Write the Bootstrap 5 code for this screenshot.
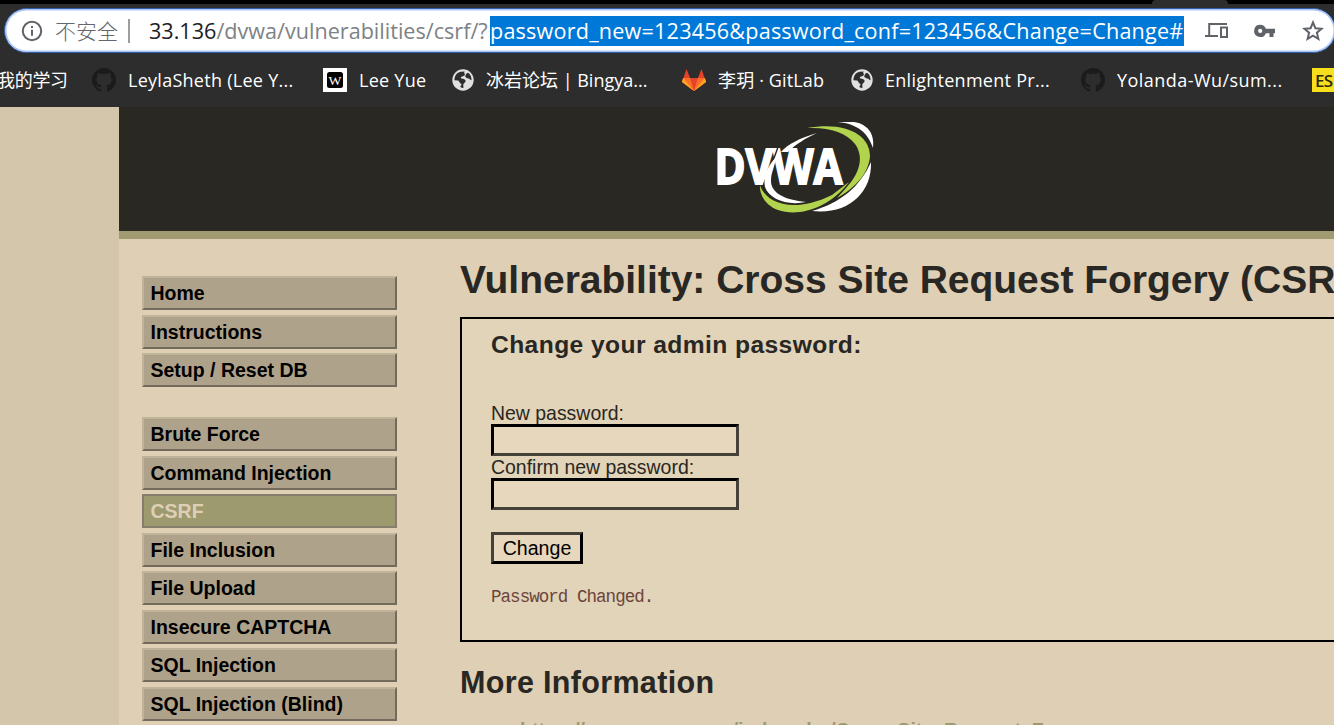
<!DOCTYPE html>
<html lang="en">
<head>
<meta charset="utf-8">
<title>Vulnerability: Cross Site Request Forgery (CSRF)</title>
<link href="https://cdn.jsdelivr.net/npm/bootstrap@5.3.0/dist/css/bootstrap.min.css" rel="stylesheet">
<style>
html,body{height:725px;overflow:hidden}
body{background:#d4c6ab;font-family:"Liberation Sans",sans-serif;font-size:19.45px;line-height:22px;color:#292723;white-space:nowrap}
.chrome{height:107px;background:#2d2d2d;font-family:"Open Sans","Noto Sans CJK SC",sans-serif}
.tabstrip{height:4px;background:#000}
.tabgap{width:76px;height:4px;margin-left:1152px;background:#2d2d2d;border-radius:4px 4px 0 0}
.omnibox{width:1332px;height:45px;margin:4px 0 0 4px;border:1px solid #315da5;border-radius:23px;background:#fff;box-shadow:inset 0 0 0 1.5px #abc5f5;color:#7d8286;font-size:21.6px;line-height:30px}
.omnibox svg{flex:none}
.info-icon{margin-left:16px}
.devices-icon{margin-left:21px}
.key-icon{margin-left:25px}
.star-icon{margin-left:26px}
.insecure{width:65px;margin-left:12px;color:#63676b;font-size:21px;font-weight:300}
.divider{width:2px;height:24px;margin-left:8px;background:#9c9da0}
.url{margin-left:19px;width:341px}
.host{color:#202124}
.picked{background:#0078d7;color:#fff;width:694px;height:30px;letter-spacing:.2px}
.bookmarks{display:grid;grid-template-columns:92px 231px 129px 230px 169px 230px 231px 22px;height:54px;color:#fff;font-size:18px;line-height:26px}
.bookmarks>a{color:#fff;text-decoration:none;display:flex;align-items:center;min-width:0}
.bookmarks svg{flex:none;margin-right:12px}
.study{margin-left:-3px;letter-spacing:-.3px}
.b1,.b2,.b5{letter-spacing:.27px}
.b4{letter-spacing:.15px}
.b6{letter-spacing:.45px}
.es{width:24px;height:24px;background:#f7df1e;color:#2c290b;font:600 17px/25px "Open Sans",sans-serif;padding-left:3px;letter-spacing:-.8px;overflow:hidden}
.site{margin-left:119px;height:618px;background:#dfcfb5;overflow:hidden}
.masthead{height:132px;background:#292823;border-bottom:8px solid #a09b70;padding:12px 0 0 593px}
.menu{width:255px;margin:37.4px 0 0 23px;flex:none}
.menu a{display:block;height:34px;margin-bottom:4.45px;padding-left:6.5px;border:2px solid;border-color:#bfb399 #746a5b #746a5b #bfb399;background:#afa28a;color:#000;font-weight:bold;font-size:19.5px;line-height:31px;text-decoration:none}
.menu a.current{background:#9d9a70;border-color:#877d6c;color:#dfcfb5}
.menu .block-end{margin-bottom:30.2px}
.content{margin-left:63px;width:1000px;flex:none}
.content h1{font-size:39px;line-height:44px;letter-spacing:-.02px;font-weight:bold;margin:19px 0 15px}
.vuln{border:2px solid #000;height:325px;background:#e2d4b8;padding:11px 29px}
.vuln h3{font-size:24.6px;line-height:29px;letter-spacing:.42px;font-weight:bold;margin:0 0 43px}
.field{display:block;width:248px;height:32px;border:3px solid;border-color:#000 #454039 #454039 #000;background:#e7d7bc;border-radius:0}
.vuln label{display:block}
.submit{display:block;width:92px;height:32px;margin-top:22px;border:3px solid;border-color:#454039 #000 #000 #454039;background:#e7d7bc;color:#000;font-size:19.6px;line-height:26px;padding:0;border-radius:0}
.vuln pre{font:17.5px/22px "Liberation Mono",monospace;color:#6b453d;margin:22px 0 0;letter-spacing:-.95px}
.content h2{font-size:30.5px;line-height:36px;letter-spacing:.33px;font-weight:bold;margin:22px 0 19px}
.refs{color:#9d9a70;font-weight:bold;padding-left:60px;font-size:19.5px}
</style>
<script src="https://cdn.jsdelivr.net/npm/bootstrap@5.3.0/dist/js/bootstrap.bundle.min.js"></script>
</head>
<body>
<svg width="0" height="0" class="position-absolute">
<defs>
<symbol id="octocat" viewBox="0 0 16 16"><path d="M8 0C3.58 0 0 3.58 0 8c0 3.54 2.29 6.53 5.47 7.59.4.07.55-.17.55-.38v-1.49c-2.01.37-2.53-.49-2.69-.94-.09-.23-.48-.94-.82-1.13-.28-.15-.68-.52-.01-.53.63-.01 1.08.58 1.23.82.72 1.21 1.87.87 2.33.66.07-.52.28-.87.51-1.07-1.78-.2-3.64-.89-3.64-3.95 0-.87.31-1.59.82-2.15-.08-.2-.36-1.02.08-2.12 0 0 .67-.21 2.2.82A7.7 7.7 0 0 1 8 3.87c.68 0 1.36.09 2 .27 1.53-1.04 2.2-.82 2.2-.82.44 1.1.16 1.92.08 2.12.51.56.82 1.27.82 2.15 0 3.07-1.87 3.75-3.65 3.95.29.25.54.73.54 1.48v2.2c0 .21.15.46.55.38A8 8 0 0 0 16 8c0-4.42-3.58-8-8-8z" fill="#1c1b1b"/></symbol>
<symbol id="globe" viewBox="0 0 22 22"><circle cx="11" cy="11" r="10.7" fill="#e0e0e0"/><path d="M2.5 11.3C2.3 6.8 5.1 3.6 8.5 2.8L12.7 2.6C11.2 4.1 13.8 4.6 12.5 6.4 11.4 7.6 9.1 6.9 8.8 8.6 8.5 9.8 10.4 9.5 11.8 10 13.4 10.8 14.6 12.1 12.6 13.7L11.3 15.2 11.4 18.9C8.5 19.2 7.5 17.4 9.3 16.6L9.4 14.7C7.3 14.5 7.7 11.8 6 11.4ZM14.5 4.6 16 3.8C18.6 5.3 19.7 8.2 19.5 11.2 18.3 11.4 18.3 9.5 16.2 9.4 14.1 9 12.8 7.8 13.3 6.7Z" fill="#2d2d2d"/></symbol>
</defs>
</svg>
<div class="chrome overflow-hidden">
  <div class="tabstrip"><div class="tabgap"></div></div>
  <div class="omnibox d-flex align-items-center">
    <svg class="info-icon" width="22" height="22" viewBox="0 0 22 22"><circle cx="11" cy="11" r="9.2" fill="none" stroke="#5f6368" stroke-width="2"/><path d="M10 6h2v2h-2zM10 9.8h2v6h-2z" fill="#5f6368"/></svg>
    <span class="insecure">不安全</span><span class="divider"></span>
    <span class="url"><span class="host">33.136</span>/dvwa/vulnerabilities/csrf/?</span>
    <span class="picked">password_new=123456&amp;password_conf=123456&amp;Change=Change#</span>
    <svg class="devices-icon" width="24" height="17" viewBox="0 0 24 17"><path d="M4.2 13V2H22M0 14h13" fill="none" stroke="#5f6368" stroke-width="2"/><path d="M16 5.5h6v9.4h-6z" fill="none" stroke="#5f6368" stroke-width="2"/></svg>
    <svg class="key-icon" width="22" height="14" viewBox="0 0 22 14"><path d="M6.2.8a6.1 6.1 0 1 0 5.7 8.4h3.6V13h4V9.2H21V4.8h-9.1A6.1 6.1 0 0 0 6.2.8zm0 4a2.1 2.1 0 1 1 0 4.2 2.1 2.1 0 0 1 0-4.2z" fill="#5f6368"/></svg>
    <svg class="star-icon" width="22" height="21" viewBox="0 0 22 21"><path d="m11 2.4 2.4 5.8 6.2.5-4.7 4 1.5 6.1-5.4-3.2-5.4 3.2 1.5-6.1-4.7-4 6.2-.5z" fill="none" stroke="#5f6368" stroke-width="2"/></svg>
  </div>
  <nav class="bookmarks">
    <a href="#"><span class="study">我的学习</span></a>
    <a href="#"><svg width="24" height="24"><use href="#octocat"/></svg><span class="b1">LeylaSheth (Lee Y...</span></a>
    <a href="#"><svg width="24" height="24" viewBox="0 0 24 24"><path fill="#fff" d="M0 0h24v24H0z"/><rect x="4" y="4" width="16" height="16" rx="2.5"/><text x="12" y="16.5" text-anchor="middle" font-family="Liberation Serif" font-size="13" fill="#fff" textLength="13" lengthAdjust="spacingAndGlyphs">W</text></svg><span class="b2">Lee Yue</span></a>
    <a href="#"><svg width="22" height="22"><use href="#globe"/></svg><span class="b3">冰岩论坛 | Bingya...</span></a>
    <a href="#"><svg width="24" height="22" viewBox="0 0 24 22"><path d="M4.5 0 0 13l12 9L24 13 19.5 0l-3.6 9H8.1z" fill="#e24329"/><path d="M1.2 9h6.9L12 22 0 13zM22.8 9h-6.9L12 22l12-9z" fill="#fc6d26"/><path d="M1.2 9 0 13l12 9zM22.8 9 24 13l-12 9z" fill="#fca326"/></svg><span class="b4">李玥 · GitLab</span></a>
    <a href="#"><svg width="22" height="22"><use href="#globe"/></svg><span class="b5">Enlightenment Pr...</span></a>
    <a href="#"><svg width="24" height="24"><use href="#octocat"/></svg><span class="b6">Yolanda-Wu/sum...</span></a>
    <a href="#"><span class="es">ES</span></a>
  </nav>
</div>
<main class="site">
  <header class="masthead">
    <svg width="166" height="98" viewBox="0 0 166 98">
      <path d="M126 3H142C155 5 163 14 161 29C156 14 146 5 126 3Z" fill="#fff"/>
      <path d="M105 14C88 19 76 25 69 33H76C84 25 94 19 105 14Z" fill="#fff"/>
      <path d="M159 43C160 75 135 96 100 92C128 84 148 68 159 43Z" fill="#fff"/>
      <text x="2.5" y="65" font-family="Open Sans" font-size="48" font-weight="bold" fill="#fff" stroke="#fff" stroke-width="1.8" textLength="128" lengthAdjust="spacingAndGlyphs">DVWA</text>
      <path d="M66 28C62 40 57 52 51 67" fill="none" stroke="#292823" stroke-width="1.4"/>
      <path d="M64 38C55 48 51 58 53 68C57 80 75 87 94 83C73 81 59 74 59 62C59 53 63 48 64 38Z" fill="#fff"/>
      <path d="M95 9C134 2 158 16 158 37C157 53 145 68 125 79L134 69C150 52 151 36 143 25C134 13 117 8 95 9Z" fill="#b1d34e"/>
      <path d="M48 66C52 81 77 97 120 76L137 63C117 90 86 98 66 91C55 87 47 77 48 66Z" fill="#b1d34e"/>
    </svg>
  </header>
  <div class="d-flex align-items-start">
    <nav class="menu">
      <a href="#">Home</a><a href="#">Instructions</a><a href="#" class="block-end">Setup / Reset DB</a>
      <a href="#">Brute Force</a><a href="#">Command Injection</a><a href="#" class="current">CSRF</a><a href="#">File Inclusion</a><a href="#">File Upload</a><a href="#">Insecure CAPTCHA</a><a href="#">SQL Injection</a><a href="#">SQL Injection (Blind)</a>
    </nav>
    <section class="content">
      <h1>Vulnerability: Cross Site Request Forgery (CSRF)</h1>
      <div class="vuln">
        <h3>Change your admin password:</h3>
        <label for="pw">New password:</label><input id="pw" type="password" class="field">
        <label for="pc">Confirm new password:</label><input id="pc" type="password" class="field">
        <button class="submit" type="button">Change</button>
        <pre>Password Changed.</pre>
      </div>
      <h2>More Information</h2>
      <div class="refs">https://www.owasp.org/index.php/Cross-Site_Request_Forgery</div>
    </section>
  </div>
</main>
</body>
</html>
